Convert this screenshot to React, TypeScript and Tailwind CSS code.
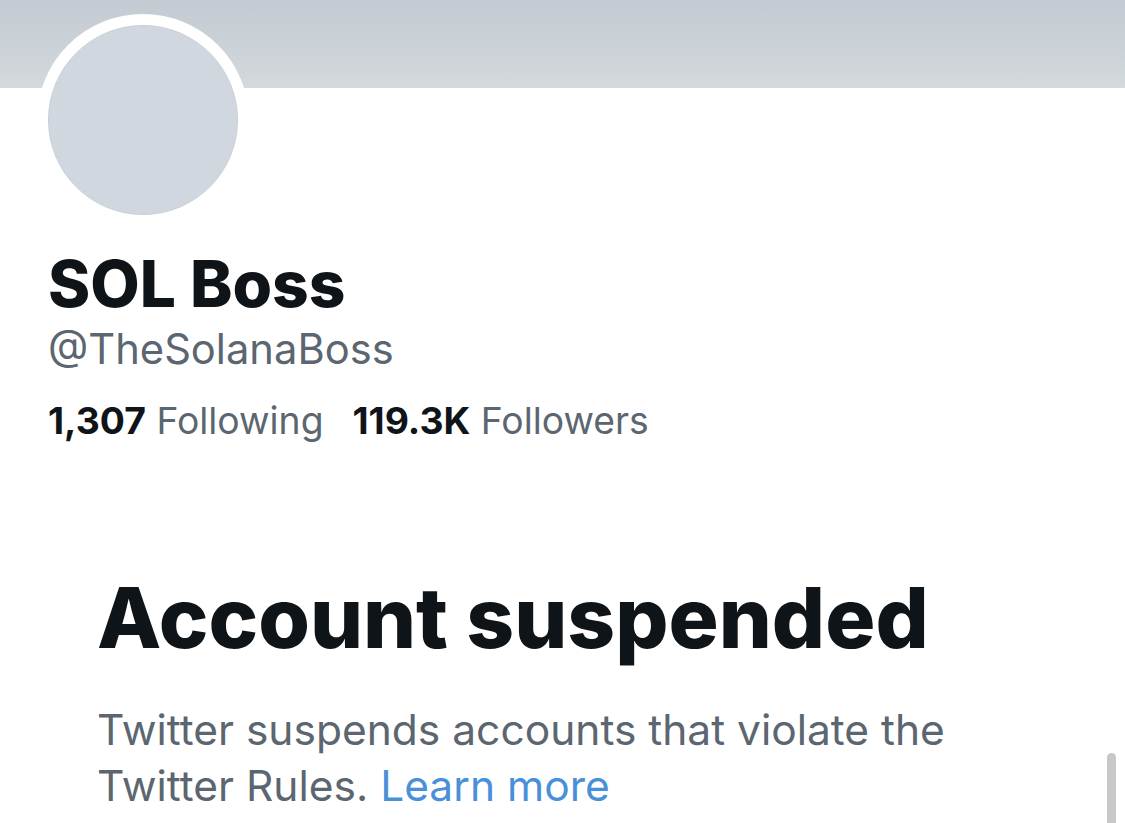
export default function App() {
    return (
        <div className="min-h-[823px] w-full bg-white relative overflow-hidden" style={{ fontFamily: 'Inter, "Liberation Sans", sans-serif' }}>
            {/* Banner */}
            <div className="h-[88px] w-full bg-gradient-to-b from-[#c3cad2] to-[#d3d9dc]" />

            {/* Avatar */}
            <div className="ml-[37px] mt-[-74px] w-[212px] h-[212px] rounded-full bg-white flex items-center justify-center">
                <div className="w-[190px] h-[190px] rounded-full bg-[#d0d7de] border border-[#c9cfd6]" />
            </div>

            {/* Profile info */}
            <div className="pl-[48px]">
                <h1 className="mt-[22px] text-[64px] leading-[72px] font-extrabold text-[#0f1419]">SOL Boss</h1>
                <div className="mt-[5px] text-[41.7px] leading-[48px] text-[#5b6670]">@TheSolanaBoss</div>
                <div className="mt-[26px] flex gap-[29px] text-[37.3px] leading-[44px]">
                    <span>
                        <span className="font-bold text-[#0f1419]">1,307</span>{' '}
                        <span className="text-[#5b6670]">Following</span>
                    </span>
                    <span>
                        <span className="font-bold text-[#0f1419]">119.3K</span>{' '}
                        <span className="text-[#5b6670]">Followers</span>
                    </span>
                </div>
            </div>

            {/* Suspended notice */}
            <div className="pl-[97px] pr-[100px]">
                <h2 className="mt-[129px] text-[83.6px] leading-[92px] font-extrabold text-[#0f1419]">Account suspended</h2>
                <p className="mt-[38px] text-[42.5px] leading-[56px] text-[#5b6670] max-w-[900px]">
                    Twitter suspends accounts that violate the Twitter Rules.{' '}
                    <span className="text-[#4a90d9]">Learn more</span>
                </p>
            </div>

            {/* Scrollbar thumb */}
            <div className="absolute left-[1107px] top-[753px] w-[9px] h-[90px] rounded-t-full bg-[#c8c8c8]" />
        </div>
    );
}
